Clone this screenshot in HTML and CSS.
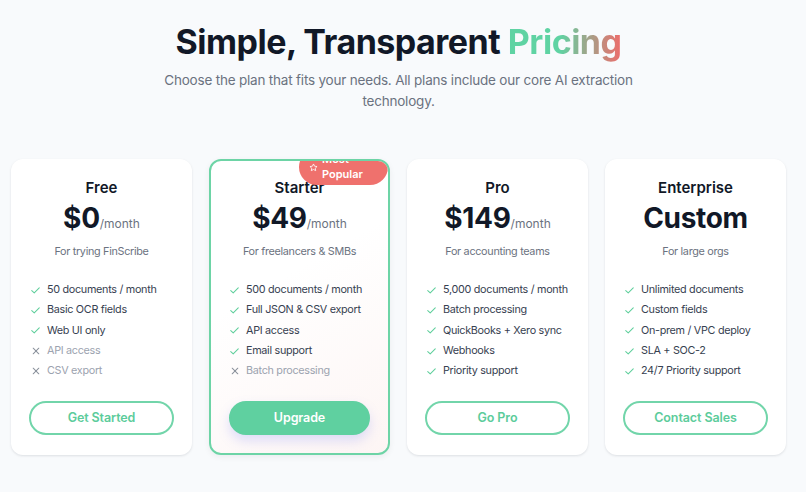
FILE: index.html
```html
<!DOCTYPE html>
<html lang="en">
<head>
<meta charset="utf-8">
<title>Pricing</title>
<link rel="stylesheet" href="styles.css">
</head>
<body>
<div class="page">
  <header class="hero">
    <h1 class="title">Simple, Transparent <span class="accent">Pricing</span></h1>
    <p class="subtitle">Choose the plan that fits your needs. All plans include our core AI extraction technology.</p>
  </header>

  <section class="plans">
    <article class="card">
      <h2 class="plan-name">Free</h2>
      <div class="price"><span class="amount">$0</span><span class="period">/month</span></div>
      <p class="plan-desc">For trying FinScribe</p>
      <ul class="features">
        <li class="feature"><svg class="ic ic-check" viewBox="0 0 12 10"><path d="M1 5.2 L4.3 8.3 L11 1.5"/></svg>50 documents / month</li>
        <li class="feature"><svg class="ic ic-check" viewBox="0 0 12 10"><path d="M1 5.2 L4.3 8.3 L11 1.5"/></svg>Basic OCR fields</li>
        <li class="feature"><svg class="ic ic-check" viewBox="0 0 12 10"><path d="M1 5.2 L4.3 8.3 L11 1.5"/></svg>Web UI only</li>
        <li class="feature off"><svg class="ic ic-x" viewBox="0 0 10 10"><path d="M1.5 1.5 L8.5 8.5 M8.5 1.5 L1.5 8.5"/></svg>API access</li>
        <li class="feature off"><svg class="ic ic-x" viewBox="0 0 10 10"><path d="M1.5 1.5 L8.5 8.5 M8.5 1.5 L1.5 8.5"/></svg>CSV export</li>
      </ul>
      <a class="btn btn-outline" href="#">Get Started</a>
    </article>

    <article class="card card-featured">
      <div class="badge"><svg class="star" viewBox="0 0 24 24"><path d="M12 2.5 L14.9 8.6 L21.5 9.4 L16.6 13.9 L17.9 20.5 L12 17.2 L6.1 20.5 L7.4 13.9 L2.5 9.4 L9.1 8.6 Z"/></svg><span>Most Popular</span></div>
      <h2 class="plan-name">Starter</h2>
      <div class="price"><span class="amount">$49</span><span class="period">/month</span></div>
      <p class="plan-desc">For freelancers &amp; SMBs</p>
      <ul class="features">
        <li class="feature"><svg class="ic ic-check" viewBox="0 0 12 10"><path d="M1 5.2 L4.3 8.3 L11 1.5"/></svg>500 documents / month</li>
        <li class="feature"><svg class="ic ic-check" viewBox="0 0 12 10"><path d="M1 5.2 L4.3 8.3 L11 1.5"/></svg>Full JSON &amp; CSV export</li>
        <li class="feature"><svg class="ic ic-check" viewBox="0 0 12 10"><path d="M1 5.2 L4.3 8.3 L11 1.5"/></svg>API access</li>
        <li class="feature"><svg class="ic ic-check" viewBox="0 0 12 10"><path d="M1 5.2 L4.3 8.3 L11 1.5"/></svg>Email support</li>
        <li class="feature off"><svg class="ic ic-x" viewBox="0 0 10 10"><path d="M1.5 1.5 L8.5 8.5 M8.5 1.5 L1.5 8.5"/></svg>Batch processing</li>
      </ul>
      <a class="btn btn-solid" href="#">Upgrade</a>
    </article>

    <article class="card">
      <h2 class="plan-name">Pro</h2>
      <div class="price"><span class="amount">$149</span><span class="period">/month</span></div>
      <p class="plan-desc">For accounting teams</p>
      <ul class="features">
        <li class="feature"><svg class="ic ic-check" viewBox="0 0 12 10"><path d="M1 5.2 L4.3 8.3 L11 1.5"/></svg>5,000 documents / month</li>
        <li class="feature"><svg class="ic ic-check" viewBox="0 0 12 10"><path d="M1 5.2 L4.3 8.3 L11 1.5"/></svg>Batch processing</li>
        <li class="feature"><svg class="ic ic-check" viewBox="0 0 12 10"><path d="M1 5.2 L4.3 8.3 L11 1.5"/></svg>QuickBooks + Xero sync</li>
        <li class="feature"><svg class="ic ic-check" viewBox="0 0 12 10"><path d="M1 5.2 L4.3 8.3 L11 1.5"/></svg>Webhooks</li>
        <li class="feature"><svg class="ic ic-check" viewBox="0 0 12 10"><path d="M1 5.2 L4.3 8.3 L11 1.5"/></svg>Priority support</li>
      </ul>
      <a class="btn btn-outline" href="#">Go Pro</a>
    </article>

    <article class="card">
      <h2 class="plan-name">Enterprise</h2>
      <div class="price"><span class="amount">Custom</span></div>
      <p class="plan-desc">For large orgs</p>
      <ul class="features">
        <li class="feature"><svg class="ic ic-check" viewBox="0 0 12 10"><path d="M1 5.2 L4.3 8.3 L11 1.5"/></svg>Unlimited documents</li>
        <li class="feature"><svg class="ic ic-check" viewBox="0 0 12 10"><path d="M1 5.2 L4.3 8.3 L11 1.5"/></svg>Custom fields</li>
        <li class="feature"><svg class="ic ic-check" viewBox="0 0 12 10"><path d="M1 5.2 L4.3 8.3 L11 1.5"/></svg>On-prem / VPC deploy</li>
        <li class="feature"><svg class="ic ic-check" viewBox="0 0 12 10"><path d="M1 5.2 L4.3 8.3 L11 1.5"/></svg>SLA + SOC-2</li>
        <li class="feature"><svg class="ic ic-check" viewBox="0 0 12 10"><path d="M1 5.2 L4.3 8.3 L11 1.5"/></svg>24/7 Priority support</li>
      </ul>
      <a class="btn btn-outline" href="#">Contact Sales</a>
    </article>
  </section>
</div>
</body>
</html>
```

FILE: styles.css
```css
* { box-sizing: border-box; }

html, body {
  margin: 0;
  padding: 0;
  background: #f8fafc;
}

body {
  font-family: Inter, "Noto Sans", "Liberation Sans", sans-serif;
  color: #111827;
  height: 492px;
  overflow: hidden;
}

.page {
  width: 797px;
  padding: 22px 11px 0;
}

.hero {
  text-align: center;
}

.title {
  margin: 0;
  font-size: 34px;
  line-height: 40px;
  font-weight: 700;
  letter-spacing: -0.5px;
  color: #111827;
}

.accent {
  background: linear-gradient(90deg, #5fd3a3 0%, #5fd3a3 45%, #ef6b6b 100%);
  -webkit-background-clip: text;
  background-clip: text;
  color: transparent;
}

.subtitle {
  margin: 8px auto 0;
  max-width: 476px;
  font-size: 13.5px;
  letter-spacing: -0.2px;
  line-height: 21px;
  color: #6b7280;
}

.plans {
  margin-top: 47px;
  display: grid;
  grid-template-columns: repeat(4, 1fr);
  gap: 17px;
}

.card {
  position: relative;
  overflow: hidden;
  background: #ffffff;
  border-radius: 12px;
  box-shadow: 0 1px 3px rgba(15, 23, 42, 0.08), 0 1px 2px rgba(15, 23, 42, 0.04);
  padding: 19px 18px 19px;
  display: flex;
  flex-direction: column;
  align-items: stretch;
  text-align: center;
}

.card-featured {
  border: 2px solid #6dd4a6;
  padding: 17px 17px 18px;
  background: linear-gradient(150deg, #ffffff 40%, #fdf5f4 100%);
  box-shadow: 0 2px 6px rgba(15, 23, 42, 0.06);
}

.badge {
  position: absolute;
  top: -12px;
  right: 0;
  width: 89px;
  padding: 3px 10px;
  border-radius: 999px;
  background: #ef716d;
  color: #ffffff;
  font-size: 11px;
  line-height: 15px;
  font-weight: 600;
  display: flex;
  align-items: center;
  gap: 4px;
  text-align: left;
}

.star {
  width: 9px;
  height: 9px;
  flex: none;
  fill: none;
  stroke: #ffffff;
  stroke-width: 2.2;
  stroke-linejoin: round;
}

.plan-name {
  margin: 0;
  font-size: 15px;
  line-height: 20px;
  font-weight: 600;
  color: #111827;
}

.price {
  margin-top: 3px;
  height: 34px;
  display: flex;
  justify-content: center;
  align-items: baseline;
  white-space: nowrap;
}

.amount {
  font-size: 28px;
  line-height: 34px;
  font-weight: 700;
  color: #111827;
  letter-spacing: -0.3px;
}

.period {
  font-size: 12px;
  color: #6b7280;
}

.plan-desc {
  margin: 9px 0 0;
  font-size: 10.8px;
  letter-spacing: -0.3px;
  line-height: 16px;
  color: #6b7280;
}

.features {
  list-style: none;
  margin: 20px 0 0;
  padding: 0 0 0 2px;
  text-align: left;
}

.feature {
  display: flex;
  align-items: center;
  gap: 7px;
  font-size: 10.8px;
  letter-spacing: -0.3px;
  line-height: 20.3px;
  color: #374151;
  white-space: nowrap;
}

.feature.off {
  color: #9ca3af;
}

.ic {
  width: 9px;
  height: 9px;
  flex: none;
  fill: none;
  stroke-linecap: round;
  stroke-linejoin: round;
}

.ic-check {
  stroke: #5fcf9c;
  stroke-width: 1.4;
}

.ic-x {
  width: 8px;
  height: 8px;
  margin: 0 0.5px;
  stroke: #8b929c;
  stroke-width: 1.3;
}

.btn {
  margin-top: 20px;
  display: block;
  height: 34px;
  line-height: 30px;
  border-radius: 999px;
  font-size: 12.5px;
  letter-spacing: -0.1px;
  font-weight: 600;
  text-decoration: none;
  text-align: center;
}

.btn-outline {
  border: 2px solid #72d5aa;
  color: #5ccc9b;
  background: transparent;
}

.btn-solid {
  border: 2px solid #5fd0a0;
  background: #5fd0a0;
  color: #ffffff;
  margin-left: 1px;
  margin-right: 1px;
  box-shadow: 0 6px 12px rgba(129, 140, 248, 0.25);
}
```
